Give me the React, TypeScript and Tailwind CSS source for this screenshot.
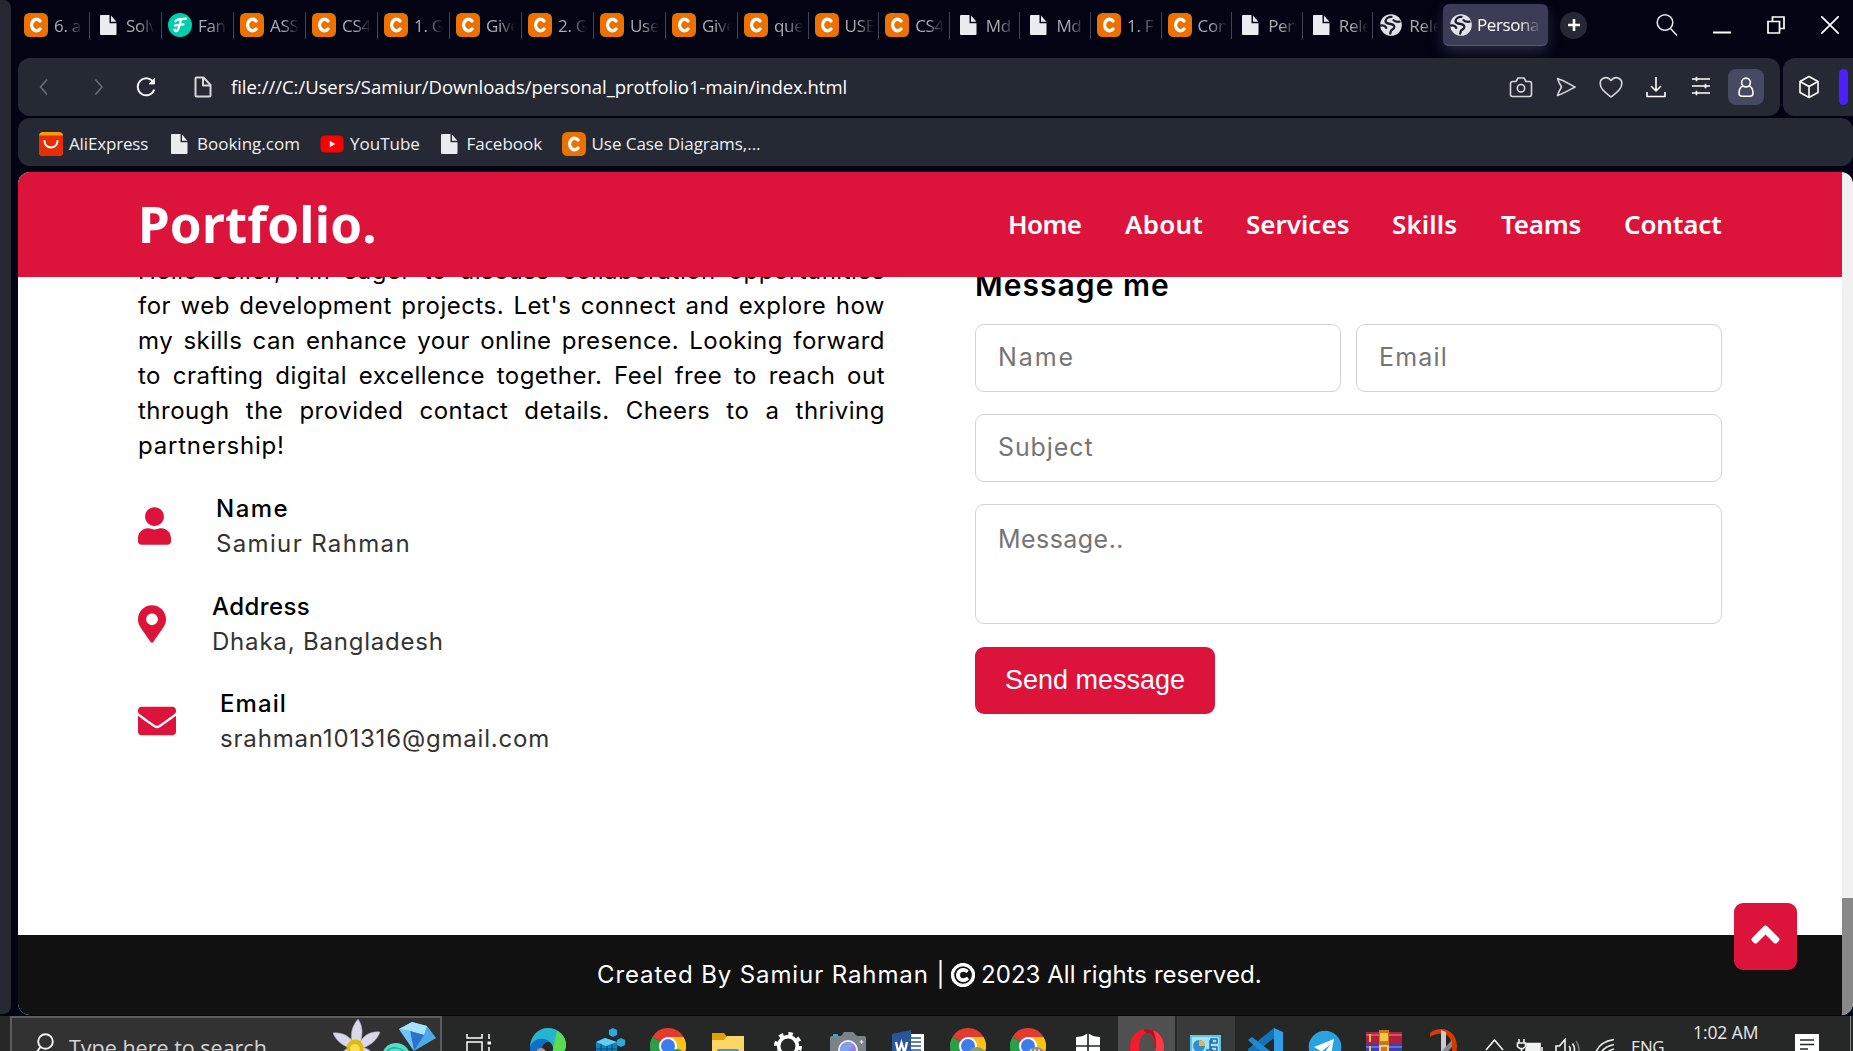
import type { ReactNode } from "react";
import { FaUser, FaMapMarkerAlt, FaEnvelope, FaAngleUp, FaRegCopyright } from "react-icons/fa";

/* ---------- Site icons ---------- */

function CBadge() {
  return (
    <svg viewBox="0 0 24 24" className="size-6 shrink-0">
      <rect width="24" height="24" rx="5.5" fill="#eb7100" />
      <path d="M16 8A4.800 5.800 0 1 0 16 16" fill="none" stroke="#fff" strokeWidth="3.400" strokeLinecap="round" />
    </svg>
  );
}

function DocIcon() {
  return (
    <svg viewBox="0 0 24 24" className="size-6 shrink-0">
      <path d="M5 2h8.500v8.300H20.500V21a1 1 0 0 1-1 1H5a1 1 0 0 1-1-1V3a1 1 0 0 1 1-1z" fill="#e9edf1" />
      <path d="M15 2.600l5.400 6.200H15z" fill="#e9edf1" />
    </svg>
  );
}

function FanIcon() {
  return (
    <svg viewBox="0 0 24 24" className="size-6 shrink-0">
      <circle cx="12" cy="12" r="12" fill="#00cfae" />
      <path d="M7.500 8.200C9 5.800 13.500 6.600 18 5.600M13 6.500c-1 4-1.500 8-3.700 11c-1 1.200-2.700.6-2.700-.8M7 12.600c2.500-.8 5-.5 8.500-1.300" fill="none" stroke="#fff" strokeWidth="2.300" strokeLinecap="round" />
    </svg>
  );
}

function GlobeIcon() {
  return (
    <svg viewBox="0 0 24 24" className="size-6 shrink-0">
      <circle cx="12" cy="12" r="10.800" fill="#dfe3e7" />
      <path d="M12.500 3.800c-3-.2-5.500 1.700-6 4.200c-.2 2 2.800 2.700 5.300 3c3 .5 4.200 2 3.200 4c-.7 1.300-2 1.500-3 2.700c-.5.800-.3 1.800-.8 2.800M2 12.500c2-.4 4.700.4 5.200 2.400M14.500 7.200c1.200 1.700 4 1.700 6 1.500" fill="none" stroke="#1b1e2e" strokeWidth="2.300" strokeLinecap="round" />
    </svg>
  );
}

type TabKind = "c" | "doc" | "fan" | "globe";

function SiteIcon({ kind }: { kind: TabKind }) {
  if (kind === "c") return <CBadge />;
  if (kind === "doc") return <DocIcon />;
  if (kind === "fan") return <FanIcon />;
  return <GlobeIcon />;
}

/* ---------- Browser chrome ---------- */

const tabs: { kind: TabKind; text: string }[] = [
  { kind: "c", text: "6. a" },
  { kind: "doc", text: "Solv" },
  { kind: "fan", text: "Fans" },
  { kind: "c", text: "ASS" },
  { kind: "c", text: "CS4" },
  { kind: "c", text: "1. G" },
  { kind: "c", text: "Give" },
  { kind: "c", text: "2. G" },
  { kind: "c", text: "Use" },
  { kind: "c", text: "Give" },
  { kind: "c", text: "que" },
  { kind: "c", text: "USE" },
  { kind: "c", text: "CS4" },
  { kind: "doc", text: "Md" },
  { kind: "doc", text: "Md" },
  { kind: "c", text: "1. F" },
  { kind: "c", text: "Con" },
  { kind: "doc", text: "Pers" },
  { kind: "doc", text: "Rele" },
  { kind: "globe", text: "Rele" },
];

function TabStrip() {
  return (
    <div className="flex h-[58px] items-start">
      <div className="flex w-[1425px] pt-[11.5px]">
        {tabs.map((t, i) => (
          <div key={i} className={"flex h-[27px] min-w-0 items-center gap-1.5 pl-1.5 " + (i < 10 ? "w-[72px] shrink-0 " : "flex-1 ") + (i < 19 ? "border-r-[1.5px] border-[#3f4357]" : "")}>
            <SiteIcon kind={t.kind} />
            <span className="w-[29px] overflow-hidden whitespace-nowrap text-[17px] leading-[27px] tracking-[-0.3px] text-[#a9abb0] [mask-image:linear-gradient(to_right,black_45%,transparent)]">
              {t.text}
            </span>
          </div>
        ))}
      </div>
      <div className="mt-1 flex h-[42px] w-[105px] items-center gap-1 rounded-md border-b border-[#565a75] bg-[#3a3d54] pl-1.5 shadow-[0_6px_14px_rgba(80,84,110,0.45)]">
        <GlobeIcon />
        <span className="w-[64px] overflow-hidden whitespace-nowrap text-[17px] tracking-[-0.4px] text-white [mask-image:linear-gradient(to_right,black_65%,transparent)]">
          Persona
        </span>
      </div>
      <div className="ml-[12px] mt-[11.5px] flex size-[27px] items-center justify-center rounded-full bg-[#252934]">
        <svg viewBox="0 0 12 12" className="size-3">
          <path d="M6 0v12M0 6h12" stroke="#fff" strokeWidth="2.600" />
        </svg>
      </div>
      <div className="ml-auto mr-[14px] flex h-[50px] items-center">
        <svg viewBox="0 0 24 24" className="mr-[34px] size-6" fill="none" stroke="#e2e6ea" strokeWidth="1.600">
          <circle cx="10" cy="9.500" r="7.800" />
          <path d="M15.500 15.500l6.500 7" />
        </svg>
        <svg viewBox="0 0 18 18" className="mr-9 h-[18px] w-[18px]">
          <path d="M0 16.500h18" stroke="#fff" strokeWidth="2" />
        </svg>
        <svg viewBox="0 0 18 18" className="mr-9 h-[18px] w-[18px]" fill="none" stroke="#fff" strokeWidth="1.700">
          <path d="M1 5.500h11.500V17H1zM5.500 5.500V1H17v11.500h-4.500" />
        </svg>
        <svg viewBox="0 0 18 18" className="h-[18px] w-[18px]" fill="none" stroke="#fff" strokeWidth="1.700">
          <path d="M0 0l18 18M18 0L0 18" />
        </svg>
      </div>
    </div>
  );
}

function LineIcon({ children, className }: { children: ReactNode; className?: string }) {
  return (
    <svg viewBox="0 0 24 24" className={"size-6 shrink-0 " + (className ?? "text-[#d5d7da]")} fill="none" stroke="currentColor" strokeWidth="1.600" strokeLinejoin="round">
      {children}
    </svg>
  );
}

function AddressBar() {
  return (
    <div className="flex h-[58px] gap-[3px]">
      <div className="flex w-[1762px] items-center rounded-xl bg-[#252934] pl-[14px] pr-4">
        <LineIcon className="text-[#6b6e78]"><path d="M15 4.500L8.500 12l6.500 7.500" /></LineIcon>
        <LineIcon className="ml-8 text-[#6b6e78]"><path d="M7.500 4.500L14 12l-6.500 7.500" /></LineIcon>
        <LineIcon className="ml-[22px] text-[#f3f4f6]">
          <path d="M19.600 7.500A8.500 8.500 0 1 0 20.300 14.500" strokeWidth="1.900" />
          <path d="M20.500 3.500V9h-5.500z" fill="currentColor" strokeWidth="0.800" />
        </LineIcon>
        <LineIcon className="ml-[33px] text-[#d5d7da]">
          <path d="M5.500 2.500h7L19.500 10v10.500a1 1 0 0 1-1 1h-13a1 1 0 0 1-1-1v-17a1 1 0 0 1 1-1zM12 2.500V10.500h7.500" strokeWidth="2" />
        </LineIcon>
        <span className="ml-4 whitespace-nowrap text-[18.5px] leading-6 tracking-[-0.03px] text-white">
          file:///C:/Users/Samiur/Downloads/personal_protfolio1-main/index.html
        </span>
        <div className="ml-auto flex items-center gap-[21px]">
          <LineIcon>
            <path d="M3.500 6.500H7l2-3.500h6l2 3.500h3.500a2 2 0 0 1 2 2v11a2 2 0 0 1-2 2h-17a2 2 0 0 1-2-2v-11a2 2 0 0 1 2-2z" />
            <circle cx="12" cy="13.200" r="3.700" />
          </LineIcon>
          <LineIcon><path d="M3.500 3.500c5 1.500 11 5 17.500 8.500c-6.500 3.500-12.500 7-17.500 8.500c1-3 2.200-5.500 4-8.500c-1.800-3-3-5.500-4-8.500z" /></LineIcon>
          <LineIcon><path d="M12 22C7 18 1.200 14.500 1.200 8.500C1.200 2.500 8.500.5 12 5.500C15.500.5 22.800 2.500 22.800 8.500C22.800 14.500 17 18 12 22z" /></LineIcon>
          <LineIcon className="text-white"><path d="M12 2v14M7 11l5 5 5-5M3 17v4.500h18V17" /></LineIcon>
          <LineIcon className="text-white"><path d="M3 4h18M3 11h18M3 18h18M7.500 1.800v4.400M16.500 8.800v4.400M7.500 15.800v4.400" strokeWidth="1.700" /></LineIcon>
          <div className="-ml-[6px] flex size-9 items-center justify-center rounded-lg bg-[#474a63]">
            <LineIcon className="text-white">
              <circle cx="12" cy="7.500" r="4.400" />
              <path d="M8.900 10.700C6.200 12.500 5 15.500 5 17.700c0 2.300 1.300 3.500 3.200 3.500h7.600c1.900 0 3.200-1.200 3.200-3.500c0-2.200-1.200-5.200-3.900-7" />
            </LineIcon>
          </div>
        </div>
      </div>
      <div className="flex flex-1 items-center rounded-l-xl bg-[#252934] pl-[14px]">
        <LineIcon className="text-white"><path d="M12 1.500l9 5v11l-9 5-9-5v-11zM3 6.500l9 5 9-5M12 11.500v11" /></LineIcon>
        <div className="ml-[18px] h-9 w-[9px] rounded-full bg-[#4b1fff]" />
      </div>
    </div>
  );
}

function Bookmark({ icon, label, className }: { icon: ReactNode; label: string; className: string }) {
  return (
    <div className="flex items-center gap-1.5">
      {icon}
      <span className={"whitespace-nowrap text-[17px] leading-6 text-[#eef0f2] " + className}>{label}</span>
    </div>
  );
}

function BookmarksBar() {
  return (
    <div className="mt-0.5 flex h-12 items-center rounded-xl bg-[#252934] pl-[21px] pt-[3px]">
      <Bookmark
        className="w-[98px] tracking-[-0.15px]"
        label="AliExpress"
        icon={
          <svg viewBox="0 0 24 24" className="size-6">
            <rect width="24" height="24" rx="4" fill="#ff9a00" />
            <path d="M0 3.500h24V20a4 4 0 0 1-4 4H4a4 4 0 0 1-4-4z" fill="#e62e04" />
            <path d="M5.500 9c0 8.500 13 8.500 13 0" fill="none" stroke="#fff" strokeWidth="2" strokeLinecap="round" />
          </svg>
        }
      />
      <Bookmark className="w-[123px]" label="Booking.com" icon={<DocIcon />} />
      <Bookmark
        className="w-[86.5px]"
        label="YouTube"
        icon={
          <svg viewBox="0 0 24 24" className="size-6">
            <rect x="0.500" y="3.500" width="23" height="17" rx="4.500" fill="#f00" />
            <path d="M9.800 8.800v6.400l5.400-3.200z" fill="#fff" />
          </svg>
        }
      />
      <Bookmark className="w-[95px]" label="Facebook" icon={<DocIcon />} />
      <Bookmark className="tracking-[-0.05px]" label="Use Case Diagrams,..." icon={<CBadge />} />
    </div>
  );
}

/* ---------- Web page ---------- */

const paragraph = [
  "Hello seller, I'm eager to discuss collaboration opportunities",
  "for web development projects. Let's connect and explore how",
  "my skills can enhance your online presence. Looking forward",
  "to crafting digital excellence together. Feel free to reach out",
  "through the provided contact details. Cheers to a thriving",
];

function PageHeader() {
  return (
    <header className="relative z-10 flex h-[105px] shrink-0 items-center justify-between bg-[#dc143c] pl-[120px] pr-[120px] font-['Noto_Sans'] text-white">
      <div className="pb-[3px] text-[51px] font-bold leading-[60px] tracking-[0.2px]">Portfolio.</div>
      <nav className="flex pb-[2px] text-[26px] font-semibold leading-9">
        <a className="w-[117px] tracking-[-0.6px]">Home</a>
        <a className="w-[121px] tracking-[0.2px]">About</a>
        <a className="w-[146px]">Services</a>
        <a className="w-[109px] tracking-[0.1px]">Skills</a>
        <a className="w-[123px] tracking-[-0.2px]">Teams</a>
        <a className="w-[98px] tracking-[-0.15px]">Contact</a>
      </nav>
    </header>
  );
}

function InfoRow({ icon, title, text, titleClass, textClass }: { icon: ReactNode; title: string; text: string; titleClass: string; textClass: string }) {
  return (
    <div className="mb-[27.5px] flex h-[70px] items-center text-[#dc143c]">
      {icon}
      <div className="leading-[35px]">
        <div className={"font-medium text-black " + titleClass}>{title}</div>
        <div className={"text-[#333] " + textClass}>{text}</div>
      </div>
    </div>
  );
}

const field = "flex rounded-[9px] border border-[#d3d3d3] bg-white px-[22px] text-[25px] text-[#757575]";

function PageBody() {
  return (
    <main className="flex h-[658px] gap-[90px] pl-[120px] font-['Inter'] text-[24px] text-black">
      <section className="w-[747px]">
        <div className="-mt-6 leading-[35px] tracking-[0.5px]">
          {paragraph.map((line) => (
            <p key={line} className="whitespace-nowrap [text-align-last:justify]">{line}</p>
          ))}
          <p className="tracking-[0.8px]">partnership!</p>
        </div>
        <div className="mt-7">
          <InfoRow icon={<FaUser className="mr-[45px] h-[38px] w-[33px]" />} title="Name" titleClass="tracking-[1.5px]" text="Samiur Rahman" textClass="tracking-[1.35px]" />
          <InfoRow icon={<FaMapMarkerAlt className="mr-[46px] h-[38px] w-[28px]" />} title="Address" titleClass="tracking-[0.4px]" text="Dhaka, Bangladesh" textClass="tracking-[0.8px]" />
          <InfoRow icon={<FaEnvelope className="mr-[44px] size-[38px]" />} title="Email" titleClass="tracking-[1.1px]" text="srahman101316@gmail.com" textClass="tracking-[0.82px]" />
        </div>
      </section>
      <section className="w-[747px]">
        <h2 className="-mt-[10px] text-[30px] font-semibold leading-9 tracking-[1.05px]">Message me</h2>
        <div className="mt-[21px] flex gap-[15px]">
          <div className={field + " h-[68px] flex-1 items-center tracking-[1.9px]"}>Name</div>
          <div className={field + " h-[68px] flex-1 items-center tracking-[1.2px]"}>Email</div>
        </div>
        <div className={field + " mt-[22px] h-[68px] items-center tracking-[0.9px]"}>Subject</div>
        <div className={field + " mt-[22px] h-[120px] pt-[19px] leading-[31px] tracking-[0.45px]"}>Message..</div>
        <button className="mt-[23px] flex h-[67px] w-[240px] items-center justify-center rounded-[9px] bg-[#dc143c] pb-px font-['Liberation_Sans'] text-[27px] text-white">
          Send message
        </button>
      </section>
    </main>
  );
}

function Page() {
  return (
    <div className="mt-[6px] flex h-[843px] overflow-hidden rounded-xl">
      <div className="relative flex w-[1824px] flex-col bg-white">
        <PageHeader />
        <PageBody />
        <footer className="flex h-20 items-center bg-[#111] pl-[579px] font-['Inter'] text-[24px] text-white">
          <span className="w-[354px] whitespace-nowrap tracking-[0.9px]">Created By Samiur Rahman |</span>
          <FaRegCopyright className="mr-[6px] size-6" stroke="currentColor" strokeWidth="22" />
          <span className="whitespace-nowrap tracking-[0.05px]">2023 All rights reserved.</span>
        </footer>
        <div className="absolute bottom-[45px] right-[45px] flex h-[67px] w-[63px] items-center justify-center rounded-[9px] bg-[#dc143c] pb-1 text-white">
          <FaAngleUp className="size-[45px]" />
        </div>
      </div>
      <div className="flex flex-1 flex-col justify-end bg-[#f1f1f1]">
        <div className="h-[117px] bg-[#888]" />
      </div>
    </div>
  );
}

/* ---------- Taskbar ---------- */

function Slot({ children, className }: { children: ReactNode; className?: string }) {
  return <div className={"flex h-[60px] shrink-0 justify-center " + (className ?? "w-[60px]")}>{children}</div>;
}

function Art({ children, className }: { children: ReactNode; className?: string }) {
  return <svg viewBox="0 0 36 36" className={"size-9 " + (className ?? "mt-3")}>{children}</svg>;
}

function ChromeArt({ badge }: { badge: ReactNode }) {
  return (
    <Art>
      <path d="M18 18L2.400 9A18 18 0 0 1 33.600 9z" fill="#e33b2e" />
      <path d="M18 18L33.600 9A18 18 0 0 1 18 36z" fill="#fbc116" />
      <path d="M18 18V36A18 18 0 0 1 2.400 9z" fill="#2c9e4b" />
      <path d="M18 9h15.600l-8 13z" fill="#fbc116" />
      <circle cx="18" cy="18" r="9" fill="#fff" />
      <circle cx="18" cy="18" r="7" fill="#3b7ded" />
      {badge}
    </Art>
  );
}

function Taskbar() {
  return (
    <div className="flex h-[35px] items-start overflow-hidden bg-[#262727] text-[#e8e8e8]">
      <div className="ml-[10px] flex h-[60px] w-[432px] shrink-0 border-2 border-[#5e5e5e] bg-[#323232] pl-[22px]">
        <svg viewBox="0 0 20 26" className="mt-[15px] h-[26px] w-5" fill="none" stroke="#f2f2f2" strokeWidth="1.900">
          <circle cx="11.500" cy="8.500" r="7.300" />
          <path d="M6.500 14l-6 8" />
        </svg>
        <span className="ml-[15px] mt-[14px] whitespace-nowrap text-[21.5px] leading-8 text-[#d4d4d4]">Type here to search</span>
        <svg viewBox="0 0 104 40" className="ml-auto mr-[3px] h-10 w-[104px]">
          <g fill="#d9d8ea" stroke="#a9a5c4" strokeWidth="0.600">
            <path d="M25 1c5 7 5 15 2 25h-8c-2-10 0-18 6-25z" />
            <path d="M0 15c9-1 16 3 20 9l-3 6C8 27 3 22 0 15z" />
            <path d="M47 14c-9-1-16 3-20 10l3 6c8-3 14-8 17-16z" />
            <path d="M5 40c3-6 8-10 15-11l-2 11zM42 40c-2-6-7-10-14-11l2 11z" />
          </g>
          <circle cx="22" cy="30" r="8.500" fill="#e3b80d" />
          <circle cx="22" cy="31" r="5" fill="#f6df52" />
          <circle cx="63" cy="39" r="14" fill="#4fe0c8" />
          <path d="M54 33c5-5 14-4 18 2M52 38c6-5 12-3 15 0" fill="none" stroke="#1fae9f" strokeWidth="1.500" />
          <path d="M66 11l13-7 15 4 9 12-22 13z" fill="#4ea9ec" />
          <path d="M66 11l13-7-2 9zM79 4l15 4-3 9-14-4z" fill="#a9e0fb" />
          <path d="M77 13l14 4-10 16z" fill="#2a76c4" />
          <path d="M66 11l11 2 4 20z" fill="#6fc5f7" />
        </svg>
      </div>
      <div className="flex w-[76px] shrink-0 justify-center pr-1 pt-[18px]">
        <svg viewBox="0 0 25 30" className="h-[30px] w-[25px]" fill="none" stroke="#fff" strokeWidth="1.500">
          <path d="M1 0v4h15V0M1 8h15v14H1zM23 0v5M23 13v12" />
          <path d="M21.500 9h3.500" strokeWidth="3" />
        </svg>
      </div>
      <Slot>
        <Art>
          <path d="M0 20C0 8 8 0 18 0C29 0 36 8 36 17C36 24 31 27 26 27C21 27 22 24 23 22C24 16 19 12 13 12C7 12 2 15 0 20z" fill="#23b5d3" />
          <path d="M27 3C33 6 36 11 36 17C36 24 31 27 26 27C21 27 22 24 23 22z" fill="#5ddb4e" />
          <path d="M0 20C2 10 14 8 20 14C15 13 11 18 12 24L14 36C5 34 0 28 0 20z" fill="#0f6fc6" />
          <circle cx="11" cy="25" r="5" fill="#b8978a" />
        </Art>
      </Slot>
      <Slot>
        <Art>
          <path d="M6 14l9-4 12 4v22H6z" fill="#1583b8" />
          <path d="M6 14l9-4 12 4-11 4z" fill="#5fd0f3" />
          <path d="M6 21h21M6 28h21M11 16v20M17 18v18M22 16v20" stroke="#0c4d74" strokeWidth="1.200" />
          <path d="M19 2l4-2 4 2v5l-4 2-4-2zM27 12l4-2 4 2v5l-4 2-4-2z" fill="#2aaade" />
        </Art>
      </Slot>
      <Slot><ChromeArt badge={<circle cx="27" cy="29" r="8" fill="#0a95a0" />} /></Slot>
      <Slot>
        <Art className="mt-[15px]">
          <path d="M2 2h12l3 4v5H2z" fill="#e2a100" />
          <path d="M2 9h12l3-4h17v29H2z" fill="#fdd667" />
          <path d="M9 18h18a2 2 0 0 1 2 2v12H7V20a2 2 0 0 1 2-2z" fill="#3b97dc" />
        </Art>
      </Slot>
      <Slot>
        <Art className="mt-[14px]">
          <circle cx="18" cy="16" r="9.300" fill="none" stroke="#fff" strokeWidth="3.600" />
          <circle cx="18" cy="16" r="12" fill="none" stroke="#fff" strokeWidth="4" strokeDasharray="4.400 5.025" />
        </Art>
      </Slot>
      <Slot>
        <Art className="mt-[16px]">
          <path d="M0 6a2 2 0 0 1 2-2h9l3-4h9l4 4h7a2 2 0 0 1 2 2v30H0z" fill="#7d8287" />
          <path d="M3 2h5v3H3z" fill="#2aa8de" />
          <circle cx="18" cy="18" r="10" fill="#eceef3" />
          <circle cx="18" cy="18" r="8" fill="#9a7be0" />
          <path d="M10 18a8 8 0 0 1 14-5l-11 11a8 8 0 0 1-3-6z" fill="#7fa0ec" />
          <path d="M31.500 8v4M29.500 10h4" stroke="#e9e9e9" strokeWidth="1.200" />
        </Art>
      </Slot>
      <Slot>
        <Art className="mt-[14px]">
          <path d="M18 4h16v32H18z" fill="#fff" />
          <path d="M20 8h11M20 12h11M20 16h11M20 20h11M20 24h11" stroke="#2b579a" strokeWidth="1.700" />
          <path d="M2 4l19-4v36H2z" fill="#2b579a" />
          <path d="M6 12l2.500 11 3-10 3 10L17 12" fill="none" stroke="#fff" strokeWidth="2.300" />
        </Art>
      </Slot>
      <Slot><ChromeArt badge={<><circle cx="27" cy="29" r="10" fill="#8a9a7c" /><circle cx="28" cy="28" r="5" fill="#d8b49a" /></>} /></Slot>
      <Slot><ChromeArt badge={<><circle cx="26" cy="29" r="10" fill="#8b8b8b" /><path d="M18 26h16M20 22h12" stroke="#c9c9c9" strokeDasharray="2 2" strokeWidth="2" /></>} /></Slot>
      <Slot>
        <Art className="mt-[16px]">
          <path d="M18 1c4 3 8 4 12 4v12c0 9-5 14-12 18C11 31 6 26 6 17V5c4 0 8-1 12-4z" fill="#fff" />
          <path d="M18 0v36M5 14h26" stroke="#262727" strokeWidth="1.700" />
        </Art>
      </Slot>
      <Slot className="w-[57px] bg-[#4f5150]">
        <Art className="mt-[13px]">
          <path fillRule="evenodd" d="M18 0C28 0 35 8 35 18S28 36 18 36S1 28 1 18S8 0 18 0zM18 4C13 4 10 11 10 18S13 32 18 32S26 25 26 18S23 4 18 4z" fill="#f51a2d" />
          <path d="M15 .3C17 0 21 0 24 1.300C29 4 31 10 30 18L26 20C26 10 24 4 18 4C17 4 14 2.500 15 .3z" fill="#b80f1c" />
          <path d="M24 1.300C31 4 35 11 35 18S31 32 24 35C27 28 29 10 24 1.300z" fill="#ff3a48" />
        </Art>
      </Slot>
      <Slot className="ml-0.5 w-[58px] bg-[#393a3a]">
        <Art className="mt-[17px]">
          <path d="M2 2h31v34H2z" fill="#5cc3ef" />
          <path d="M4 4h27v32H4z" fill="#a5e1fa" />
          <circle cx="11" cy="13" r="6" fill="#2d8fce" />
          <path d="M11 13V7a6 6 0 0 1 6 6z" fill="#f7b32b" />
          <path d="M18 17h4V8h3M22 17h3M23 6h6v4h-6zM23 14h6v4h-6z" fill="none" stroke="#1d6fa8" strokeWidth="1.500" />
        </Art>
      </Slot>
      <Slot>
        <Art>
          <path d="M27 0l9 4v32h-9z" fill="#2f9fe6" />
          <path d="M27 0v10L6 27l-5-3v-3z" fill="#1473b8" />
          <path d="M1 12l4-3L36 33v3h-9z" fill="#1c8ad6" />
        </Art>
      </Slot>
      <Slot className="w-[59px]">
        <Art className="mt-[14px]">
          <circle cx="18" cy="17" r="16.300" fill="#2ba2df" />
          <path d="M7 17l20-8-3.500 18-6-4.500 6-8-9 7z" fill="#fff" />
        </Art>
      </Slot>
      <Slot>
        <Art className="mt-[14px]">
          <path d="M0 2h36v12H0z" fill="#b3203d" />
          <path d="M0 14h36v11H0z" fill="#3d3fb0" />
          <path d="M0 25h36v11H0z" fill="#2c8a3d" />
          <path d="M0 5h36M0 17h36" stroke="#ffffff" strokeOpacity="0.250" strokeWidth="2" />
          <path d="M13 0h10v36H13z" fill="#c97a18" />
          <path d="M14 3h8v8h-8z" fill="#f3c944" />
          <path d="M14 16h8v6h-8z" fill="none" stroke="#f1e4c2" strokeWidth="1.500" />
          <path d="M4 4v8M4 16v8" stroke="#f3c944" strokeWidth="2" />
        </Art>
      </Slot>
      <Slot>
        <Art>
          <path d="M4 5C12-2 30-1 31 18c0 8-4 12-8 14c4-8 5-18-1-24C17 4 10 5 4 9z" fill="#d83b01" />
          <path d="M15 2l5 2v32h-5z" fill="#c9cbd0" />
          <path d="M26 12l-10 11v7l10-11z" fill="#85888d" />
        </Art>
      </Slot>
      <svg viewBox="0 0 130 24" className="ml-[11px] mt-[22px] h-6 w-[130px] shrink-0" fill="none" stroke="#f2f2f2" strokeWidth="1.600">
        <path d="M1 12l8.500-10L18 12" />
        <path d="M34 1v4M39 1v4M32.500 5h8v3.500l-2.500 2h-3l-2.500-2zM36.500 11v12" />
        <path d="M42 5.500h13V24H41V11l1-2z" fill="#f2f2f2" />
        <path d="M57 9v7" />
        <path d="M71 8h3.500L80 1.500v19L74.500 14H71z" />
        <path d="M84 8q2.500 3 0 7M87.500 5.500q4 5.500 0 11.500" />
        <path d="M91 3q6 8 0 17" stroke="#777" />
        <path d="M110 17q3-13 19-15.500M115 18q2-9 14-11.500M120 19q1-6 9-8" />
      </svg>
      <span className="ml-[16px] mt-[19px] w-[62px] text-[17px] leading-6 tracking-[-0.5px]">ENG</span>
      <span className="mt-1 w-[102px] whitespace-nowrap text-[17.5px] leading-6 tracking-[-0.1px]">1:02 AM</span>
      <svg viewBox="0 0 24 24" className="mt-[18px] size-6 shrink-0">
        <path d="M0 0h24v24H0z" fill="#fff" />
        <path d="M5 6h14M5 10.500h14M5 15h8" stroke="#262727" strokeWidth="1.500" />
      </svg>
      <div className="ml-auto h-9 w-[3px] shrink-0 border-l border-[#8a8a8a]" />
    </div>
  );
}

export default function App() {
  return (
    <div className="flex h-[1051px] w-[1853px] flex-col overflow-hidden bg-[#020414] font-['Open_Sans',sans-serif]">
      <div className="flex h-[1016px]">
        <div className="mb-[2px] mr-[7px] w-[11px] shrink-0 rounded-r-lg bg-[#252934]" />
        <div className="flex min-w-0 flex-1 flex-col">
          <TabStrip />
          <AddressBar />
          <BookmarksBar />
          <Page />
        </div>
      </div>
      <Taskbar />
    </div>
  );
}
